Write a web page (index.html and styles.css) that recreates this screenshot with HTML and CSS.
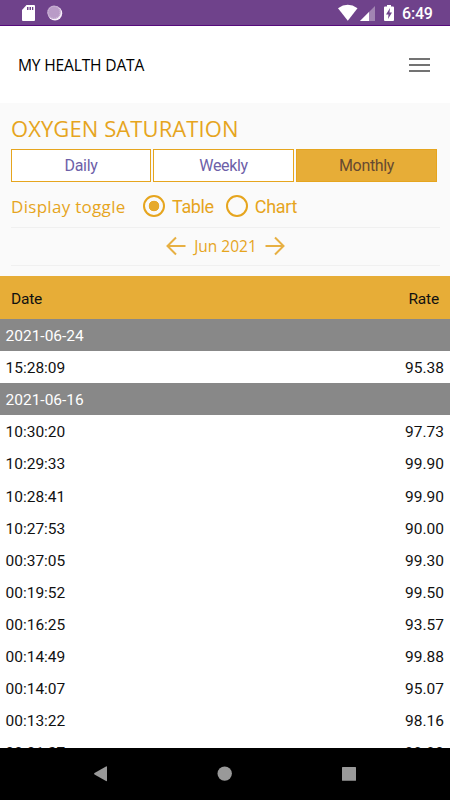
FILE: index.html
```html
<!DOCTYPE html>
<html lang="en">
<head>
<meta charset="utf-8">
<title>My Health Data</title>
<link rel="stylesheet" href="styles.css">
</head>
<body>
<div class="status">
  <svg class="status-icons" width="80" height="25" viewBox="0 0 80 25">
    <path d="M26.500 5H34q1 0 1 1v14q0 1-1 1H23q-1 0-1-1V10z" fill="#fff"/>
    <path d="M27 7h1.500v3H27zM29.500 7H31v3h-1.500zM32 7h1.300v3H32z" fill="#6f428b"/>
    <circle cx="55" cy="13.300" r="7.200" fill="#f7effa"/>
    <circle cx="54" cy="12.300" r="6.700" fill="#b99bc7"/>
    <circle cx="54" cy="12.300" r="6" fill="none" stroke="#d7c4df" stroke-dasharray="1 1"/>
  </svg>
  <svg class="status-icons" width="60" height="25" viewBox="337 0 60 25">
    <path d="M338 8.200Q347.800 1.500 357.500 8.200L347.800 20.800z" fill="#fff"/>
    <path d="M375 6v15h-15z" fill="#a184b2"/>
    <path d="M369 12v9h-9z" fill="#fff"/>
    <path d="M387 5h4v1.500h2q1 0 1 1V20q0 1-1 1h-8q-1 0-1-1V7.500q0-1 1-1h2z" fill="#fff"/>
    <path d="M390 8l-4 6.500h2.500L388 19l4-6.500h-2.500z" fill="#6f428b"/>
  </svg>
  <span class="clock">6:49</span>
</div>
<header class="header">
  <h1>MY HEALTH DATA</h1>
  <div class="menu"><i></i><i></i><i></i></div>
</header>
<main class="panel">
  <h2>OXYGEN SATURATION</h2>
  <div class="tabs"><div class="tab">Daily</div><div class="tab">Weekly</div><div class="tab active">Monthly</div></div>
  <div class="toggle">
    <span class="toggle-label">Display toggle</span>
    <span class="radio checked"></span><span class="option">Table</span>
    <span class="radio"></span><span class="option">Chart</span>
  </div>
  <div class="month">
    <svg width="20" height="20" viewBox="0 0 20 20"><path d="M19.500 10H2M10 1.500L1.500 10L10 18.500"/></svg>
    <span>Jun 2021</span>
    <svg width="20" height="20" viewBox="0 0 20 20"><path d="M.5 10h17.500M10 1.500L18.500 10L10 18.500"/></svg>
  </div>
</main>
<section class="table">
  <div class="thead"><span>Date</span><span>Rate</span></div>
  <div class="row day"><span>2021-06-24</span></div>
  <div class="row"><span>15:28:09</span><span>95.38</span></div>
  <div class="row day"><span>2021-06-16</span></div>
  <div class="row"><span>10:30:20</span><span>97.73</span></div>
  <div class="row"><span>10:29:33</span><span>99.90</span></div>
  <div class="row"><span>10:28:41</span><span>99.90</span></div>
  <div class="row"><span>10:27:53</span><span>90.00</span></div>
  <div class="row"><span>00:37:05</span><span>99.30</span></div>
  <div class="row"><span>00:19:52</span><span>99.50</span></div>
  <div class="row"><span>00:16:25</span><span>93.57</span></div>
  <div class="row"><span>00:14:49</span><span>99.88</span></div>
  <div class="row"><span>00:14:07</span><span>95.07</span></div>
  <div class="row"><span>00:13:22</span><span>98.16</span></div>
  <div class="row"><span>00:01:27</span><span>99.90</span></div>
</section>
<nav class="nav">
  <svg width="450" height="52" viewBox="0 748 450 52" fill="#999">
    <path d="M106 766.500q1-.5 1 .5v13.500q0 1-1 .5l-11.500-6.600q-1-.7 0-1.300z"/>
    <circle cx="224.700" cy="773.600" r="7.200"/>
    <rect x="342" y="767" width="14" height="13.800" rx=".5"/>
  </svg>
</nav>
</body>
</html>
```

FILE: styles.css
```css
* { box-sizing: border-box; }
body {
  margin: 0;
  width: 450px;
  height: 800px;
  display: flex;
  flex-direction: column;
  overflow: hidden;
  background: #fff;
  font-family: Roboto, sans-serif;
}
h1, h2 { margin: 0; }
.status {
  height: 26px;
  flex: none;
  display: flex;
  background: #6f428b;
  border-bottom: 1px solid #560a7c;
  color: #fff;
}
.status-icons { display: block; flex: none; }
.status-icons + .status-icons { margin-left: 257px; }
.clock {
  margin-left: 5px;
  font: 500 16px/28px Roboto, sans-serif;
  letter-spacing: -0.2px;
}
.header {
  height: 77px;
  flex: none;
  display: flex;
  align-items: center;
  justify-content: space-between;
  padding: 0 20px 0 18px;
}
h1 {
  font: 500 15.600px/24px "Open Sans", sans-serif;
  letter-spacing: -0.18px;
  color: #000;
}
.menu { display: grid; gap: 4px; width: 21px; }
.menu i { height: 2px; background: #737373; }
.panel {
  height: 173px;
  flex: none;
  padding: 10px 11px 0;
  background: #fafafa;
  color: #e6a51e;
}
h2 {
  height: 36px;
  font: 400 22px/31px "Open Sans", sans-serif;
  letter-spacing: 0.08px;
  white-space: nowrap;
}
.tabs {
  display: grid;
  grid-template-columns: 140px 141px 141px;
  gap: 2px;
  height: 32px;
}
.tab {
  border: 1px solid #e6a51e;
  background: #fff;
  color: #6d60a8;
  font-size: 16px;
  letter-spacing: -0.35px;
  line-height: 31px;
  text-align: center;
}
.active { background: #e7ad37; color: #664a31; }
.toggle {
  height: 47px;
  margin-right: -1px;
  display: flex;
  align-items: center;
  padding-top: 4px;
  border-bottom: 1px solid #f0f0f0;
}
.toggle-label {
  width: 132px;
  padding-top: 1px;
  font: 17px/24px "Open Sans", sans-serif;
  letter-spacing: 0.3px;
}
.radio {
  width: 22px;
  height: 22px;
  border: 2px solid #e6a51e;
  border-radius: 50%;
}
.checked { background: radial-gradient(circle, #e6a92c 5px, transparent 5.600px); }
.option { margin: 2px 12px 0 7px; font-size: 18px; line-height: 24px; letter-spacing: -0.35px; }
.month {
  height: 38px;
  margin-right: -1px;
  display: flex;
  align-items: center;
  justify-content: center;
  gap: 8px;
  padding-bottom: 2px;
  border-bottom: 1px solid #f0f0f0;
  font: 15.500px/24px "Open Sans", sans-serif;
}
.month svg { fill: none; stroke: #e7b043; stroke-width: 2; }
.table {
  height: 472px;
  flex: none;
  overflow: hidden;
  font-size: 15.500px;
  color: #111;
}
.thead {
  height: 43px;
  display: flex;
  align-items: center;
  justify-content: space-between;
  padding: 2px 11px 0;
  background: #e7ad37;
  letter-spacing: -0.2px;
}
.row {
  height: 32.100px;
  display: flex;
  align-items: center;
  justify-content: space-between;
  padding: 2px 6px 0 5.500px;
}
.day { background: #888; color: #fff; }
.nav { height: 52px; flex: none; background: #000; }
.nav svg { display: block; }
```
